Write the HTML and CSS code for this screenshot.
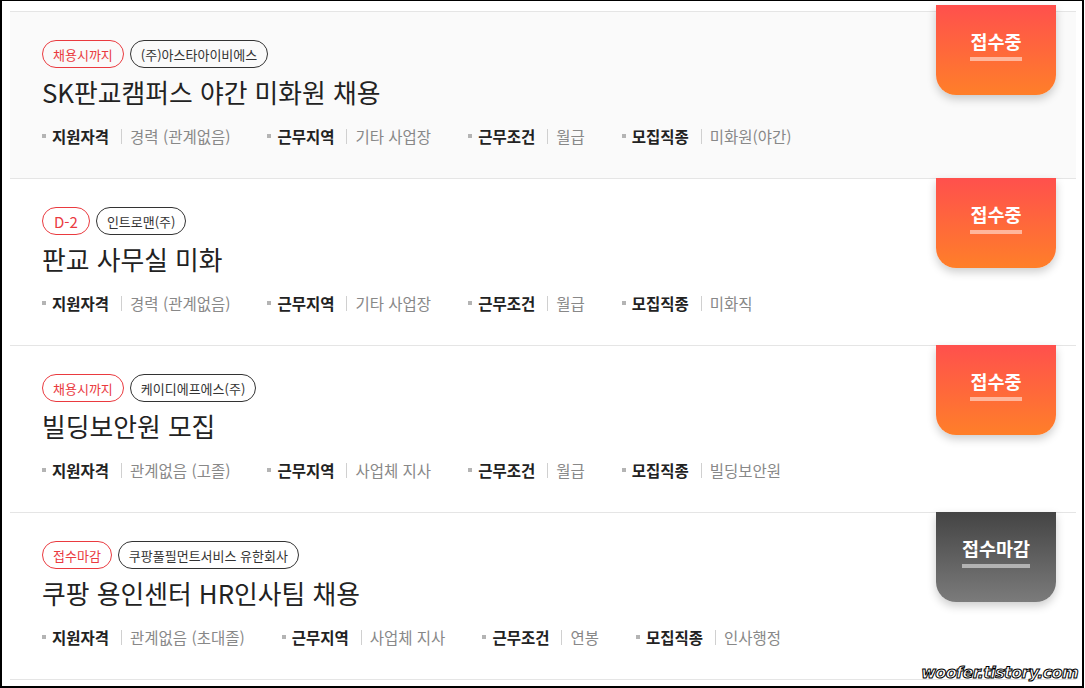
FILE: index.html
```html
<!DOCTYPE html>
<html lang="ko">
  <head>
    <meta charset="UTF-8" />
    <meta name="viewport" content="width=device-width, initial-scale=1.0" />
    <title>채용공고 목록</title>
    <link rel="stylesheet" href="styles.css">
  </head>
  <body>
    <div class="frame">
      <ul class="job-list">
        <li class="job active">
          <div class="tags">
            <span class="tag tag-red">채용시까지</span>
            <span class="tag">(주)아스타아이비에스</span>
          </div>
          <h3 class="title">SK판교캠퍼스 야간 미화원 채용</h3>
          <div class="info">
            <span class="item"><b>지원자격</b><em>경력 (관계없음)</em></span>
            <span class="item"><b>근무지역</b><em>기타 사업장</em></span>
            <span class="item"><b>근무조건</b><em>월급</em></span>
            <span class="item"><b>모집직종</b><em>미화원(야간)</em></span>
          </div>
          <div class="state"><span>접수중</span></div>
        </li>
        <li class="job">
          <div class="tags">
            <span class="tag tag-red tag-dday">D-2</span>
            <span class="tag">인트로맨(주)</span>
          </div>
          <h3 class="title">판교 사무실 미화</h3>
          <div class="info">
            <span class="item"><b>지원자격</b><em>경력 (관계없음)</em></span>
            <span class="item"><b>근무지역</b><em>기타 사업장</em></span>
            <span class="item"><b>근무조건</b><em>월급</em></span>
            <span class="item"><b>모집직종</b><em>미화직</em></span>
          </div>
          <div class="state"><span>접수중</span></div>
        </li>
        <li class="job">
          <div class="tags">
            <span class="tag tag-red">채용시까지</span>
            <span class="tag">케이디에프에스(주)</span>
          </div>
          <h3 class="title">빌딩보안원 모집</h3>
          <div class="info">
            <span class="item"><b>지원자격</b><em>관계없음 (고졸)</em></span>
            <span class="item"><b>근무지역</b><em>사업체 지사</em></span>
            <span class="item"><b>근무조건</b><em>월급</em></span>
            <span class="item"><b>모집직종</b><em>빌딩보안원</em></span>
          </div>
          <div class="state"><span>접수중</span></div>
        </li>
        <li class="job">
          <div class="tags">
            <span class="tag tag-red">접수마감</span>
            <span class="tag">쿠팡풀필먼트서비스 유한회사</span>
          </div>
          <h3 class="title">쿠팡 용인센터 HR인사팀 채용</h3>
          <div class="info">
            <span class="item"><b>지원자격</b><em>관계없음 (초대졸)</em></span>
            <span class="item"><b>근무지역</b><em>사업체 지사</em></span>
            <span class="item"><b>근무조건</b><em>연봉</em></span>
            <span class="item"><b>모집직종</b><em>인사행정</em></span>
          </div>
          <div class="state closed"><span>접수마감</span></div>
        </li>
      </ul>
      <div class="watermark">woofer.tistory.com</div>
    </div>
  </body>
</html>
```

FILE: styles.css
```css
body {
  margin: 0;
  padding: 0;
  background: #fff;
  font-family: "Noto Sans CJK KR", "Noto Sans", sans-serif;
  color: #222;
}

.frame {
  position: relative;
  width: 1084px;
  height: 688px;
  box-sizing: border-box;
  border: 2px solid #000;
  border-top-width: 1px;
  padding: 10px 6px 0 8px;
  overflow: hidden;
}

.job-list {
  list-style: none;
  margin: 0;
  padding: 0;
  border-bottom: 1px solid #e5e5e5;
}

.job {
  position: relative;
  height: 166px;
  box-sizing: content-box;
  border-top: 1px solid #e5e5e5;
  padding: 0 0 0 32px;
  background: #fff;
}

.job.active {
  background: #fafafa;
}

.tags {
  display: flex;
  gap: 6px;
  padding-top: 28px;
}

.tag {
  display: inline-flex;
  align-items: center;
  height: 28px;
  box-sizing: border-box;
  padding: 0 10px;
  border: 1px solid #333;
  border-radius: 14px;
  font-size: 13px;
  color: #333;
}

.tag-red {
  border-color: #ea3a3f;
  color: #ea3a3f;
}

.tag-dday {
  font-size: 15px;
  padding: 0 11px;
}

.title {
  margin: 6px 0 0;
  font-size: 25.8px;
  font-weight: 400;
  line-height: 36px;
  color: #222;
}

.info {
  display: flex;
  margin-top: 16px;
  font-size: 15.5px;
  line-height: 20px;
}

.item {
  display: flex;
  align-items: center;
  margin-right: 37px;
}

.item::before {
  content: "";
  width: 4px;
  height: 4px;
  margin-right: 6px;
  background: #b4b4b4;
}

.item b {
  font-weight: 700;
  color: #222;
}

.item em {
  font-style: normal;
  color: #888;
  margin-left: 12px;
  padding-left: 8px;
  border-left: 1px solid #d0d0d0;
  line-height: 15px;
}

.state {
  position: absolute;
  top: -1px;
  right: 20px;
  width: 120px;
  height: 90px;
  box-sizing: border-box;
  padding-top: 24px;
  text-align: center;
  border-radius: 0 0 20px 20px;
  background: linear-gradient(to bottom, #ff504d, #ff7f29);
  box-shadow: 0 4px 10px rgba(0, 0, 0, 0.2);
}

.job:first-child .state {
  top: -7px;
}

.state span {
  display: inline-block;
  font-size: 18.5px;
  font-weight: 700;
  line-height: 24px;
  color: #fff;
  padding-bottom: 4px;
  border-bottom: 4px solid rgba(255, 255, 255, 0.5);
}

.state.closed {
  background: linear-gradient(to bottom, #444, #7b7b7b);
}

.watermark {
  position: absolute;
  right: 4px;
  bottom: 4px;
  font-family: "DejaVu Sans", sans-serif;
  font-size: 16px;
  font-weight: 700;
  font-style: italic;
  letter-spacing: -0.6px;
  color: #fff;
  -webkit-text-stroke: 1px #000;
}
```
